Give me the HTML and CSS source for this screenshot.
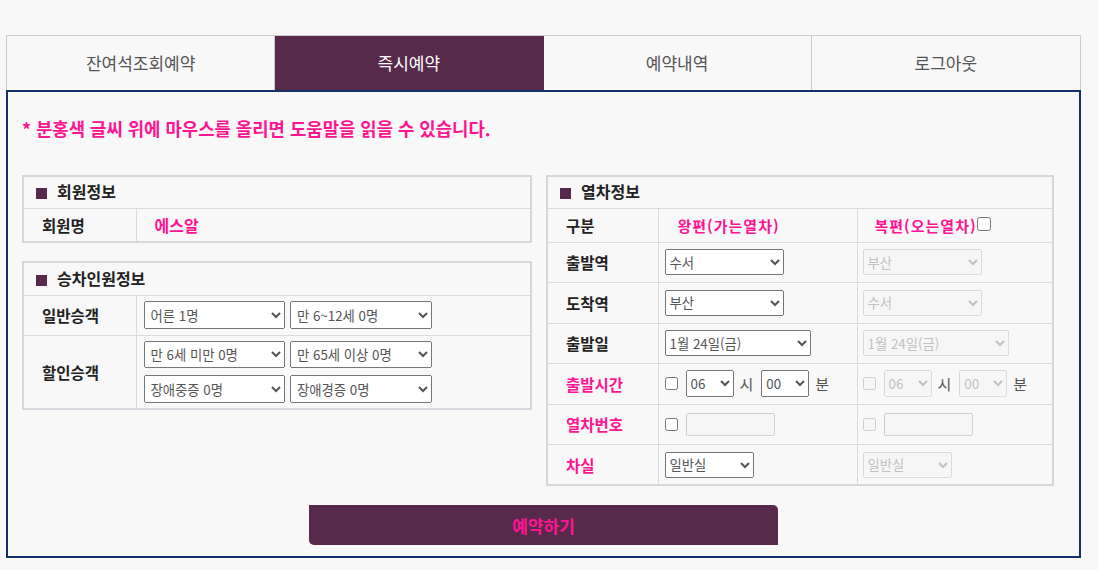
FILE: index.html
```html
<!DOCTYPE html>
<html lang="ko">
<head>
<meta charset="utf-8">
<title>즉시예약</title>
<link rel="stylesheet" href="styles.css">
</head>
<body>
<div class="wrap">
  <nav class="tabs">
    <a class="tab">잔여석조회예약</a>
    <a class="tab active">즉시예약</a>
    <a class="tab">예약내역</a>
    <a class="tab">로그아웃</a>
  </nav>
  <main class="main">
    <p class="notice">* 분홍색 글씨 위에 마우스를 올리면 도움말을 읽을 수 있습니다.</p>
    <div class="cols">
      <div class="left">
        <table class="tbl t-member">
          <colgroup><col class="c-lbl"><col></colgroup>
          <tr class="r-cap"><th colspan="2"><span class="sq"></span>회원정보</th></tr>
          <tr class="r-member"><td class="lbl">회원명</td><td class="val name">에스알</td></tr>
        </table>
        <table class="tbl t-pass">
          <colgroup><col class="c-lbl"><col></colgroup>
          <tr class="r-cap2"><th colspan="2"><span class="sq"></span>승차인원정보</th></tr>
          <tr class="r-normal">
            <td class="lbl">일반승객</td>
            <td class="val">
              <div class="sel-row">
                <select class="psel"><option>어른 1명</option></select>
                <select class="psel"><option>만 6~12세 0명</option></select>
              </div>
            </td>
          </tr>
          <tr class="r-disc">
            <td class="lbl">할인승객</td>
            <td class="val">
              <div class="sel-row">
                <select class="psel"><option>만 6세 미만 0명</option></select>
                <select class="psel"><option>만 65세 이상 0명</option></select>
              </div>
              <div class="sel-row">
                <select class="psel"><option>장애중증 0명</option></select>
                <select class="psel"><option>장애경증 0명</option></select>
              </div>
            </td>
          </tr>
        </table>
      </div>
      <div class="right">
        <table class="tbl t-train">
          <colgroup><col class="c-lbl2"><col class="c-go"><col></colgroup>
          <tr class="r-cap"><th colspan="3"><span class="sq"></span>열차정보</th></tr>
          <tr class="r-head">
            <td class="lbl">구분</td>
            <td class="hd pink">왕편(가는열차)</td>
            <td class="hd pink">복편(오는열차)<input type="checkbox" class="cb-head"></td>
          </tr>
          <tr class="r-row">
            <td class="lbl">출발역</td>
            <td class="v"><select class="st"><option>수서</option></select></td>
            <td class="v"><select class="st" disabled><option>부산</option></select></td>
          </tr>
          <tr class="r-row">
            <td class="lbl">도착역</td>
            <td class="v"><select class="st"><option>부산</option></select></td>
            <td class="v"><select class="st" disabled><option>수서</option></select></td>
          </tr>
          <tr class="r-row">
            <td class="lbl">출발일</td>
            <td class="v"><select class="dt"><option>1월 24일(금)</option></select></td>
            <td class="v"><select class="dt" disabled><option>1월 24일(금)</option></select></td>
          </tr>
          <tr class="r-row">
            <td class="lbl pink">출발시간</td>
            <td class="v">
              <div class="time">
                <input type="checkbox" class="cb">
                <select class="tm"><option>06</option></select>
                <span class="unit">시</span>
                <select class="tm"><option>00</option></select>
                <span class="unit">분</span>
              </div>
            </td>
            <td class="v">
              <div class="time off">
                <input type="checkbox" class="cb" disabled>
                <select class="tm" disabled><option>06</option></select>
                <span class="unit">시</span>
                <select class="tm" disabled><option>00</option></select>
                <span class="unit">분</span>
              </div>
            </td>
          </tr>
          <tr class="r-row">
            <td class="lbl pink">열차번호</td>
            <td class="v"><div class="time"><input type="checkbox" class="cb"><input type="text" class="no" disabled></div></td>
            <td class="v"><div class="time"><input type="checkbox" class="cb" disabled><input type="text" class="no" disabled></div></td>
          </tr>
          <tr class="r-row">
            <td class="lbl pink">차실</td>
            <td class="v"><select class="room"><option>일반실</option></select></td>
            <td class="v"><select class="room" disabled><option>일반실</option></select></td>
          </tr>
        </table>
      </div>
    </div>
    <button class="submit" type="button">예약하기</button>
  </main>
</div>
</body>
</html>
```

FILE: styles.css
```css
* { box-sizing: border-box; }
html, body { margin: 0; background: #f8f8f8; }
body {
  font-family: "Noto Sans CJK KR", "Noto Sans", sans-serif;
  color: #222;
}
.wrap { padding: 35px 17px 12px 6px; width: 1098px; }

.tabs {
  display: grid;
  grid-template-columns: repeat(4, 1fr);
  height: 55px;
  border: 1px solid #cccccc;
  border-bottom: 0;
}
.tab {
  display: flex;
  align-items: center;
  justify-content: center;
  font-size: 17px;
  color: #555;
  border-right: 1px solid #cccccc;
  padding-bottom: 1px;
}
.tab:last-child { border-right: 0; }
.tab.active { background: #572a4b; color: #fff; border-right-color: #572a4b; }

.main {
  border: 2px solid #133165;
  padding: 25px 14px 11px 14px;
}
.notice {
  margin: 0;
  font-size: 17.8px;
  line-height: 22px;
  font-weight: bold;
  color: deeppink;
}

.cols {
  display: grid;
  grid-template-columns: 510px 508px;
  column-gap: 14px;
  margin-top: 36px;
  align-items: start;
}

.tbl {
  border-collapse: collapse;
  border: 2px solid #d6d6dc;
  font-size: 15.5px;
}
.tbl td, .tbl th { border: 1px solid #dadadd; padding: 0; }
.left .tbl { width: 510px; }
.right .tbl { width: 508px; }
.t-pass { margin-top: 18px; }
.c-lbl { width: 113px; }
.c-lbl2 { width: 111px; }
.c-go { width: 199px; }

.tbl th {
  text-align: left;
  font-weight: bold;
  font-size: 16px;
  padding-left: 12px;
  height: 32px;
  padding-bottom: 2px;
}
.sq {
  display: inline-block;
  width: 11px;
  height: 11px;
  background: #572a4b;
  margin-right: 10px;
  vertical-align: -1px;
}
.r-cap2 th { height: 33px; }

.lbl {
  font-weight: bold;
  padding-left: 18px !important;
  white-space: nowrap;
}
.pink { color: deeppink; }
.name { color: deeppink; font-weight: bold; font-size: 16px; padding-left: 18px !important; }
.r-member td { height: 34px; }
.r-normal td { height: 40px; }
.r-disc td { height: 74px; }
.t-pass .val { padding-left: 7px; }

.sel-row { display: flex; gap: 5px; }
.sel-row + .sel-row { margin-top: 7px; }

select, input {
  font-family: "Noto Sans CJK KR", "Noto Sans", sans-serif;
  font-size: 13.33px;
  color: #555;
  margin: 0;
}
select:disabled, input:disabled { color: #aaa; }
.psel { width: 141.5px; height: 27.5px; padding-left: 2px; }

.r-head td { height: 34px; }
.hd { font-weight: bold; font-size: 15px; letter-spacing: 1px; padding-left: 19px !important; }
.r-head td.hd:last-child { padding-left: 17px !important; }
.cb-head { margin: 0; width: 14px; height: 14px; vertical-align: 1px; }
.r-row td { height: 40.5px; }
.t-train .v { padding-left: 6px; }
.t-train td.v:last-child { padding-left: 5px; }
.st { width: 119px; height: 26px; }
.dt { width: 146px; height: 26px; }
.tm { width: 48px; height: 27px; }
.room { width: 89px; height: 26px; }
.time { display: flex; align-items: center; }
.cb { margin: 0 8px 0 0; width: 13px; height: 13px; }
.unit { font-size: 15px; color: #555; margin: 0 8px 0 6px; }
.no { width: 89px; height: 23px; }

.submit {
  display: block;
  width: 469px;
  height: 40px;
  margin: 19px auto 0;
  border: 0;
  border-radius: 0 5px 0 5px;
  background: #572a4b;
  color: deeppink;
  font-family: "Noto Sans CJK KR", "Noto Sans", sans-serif;
  font-size: 17px;
  font-weight: bold;
}
```
